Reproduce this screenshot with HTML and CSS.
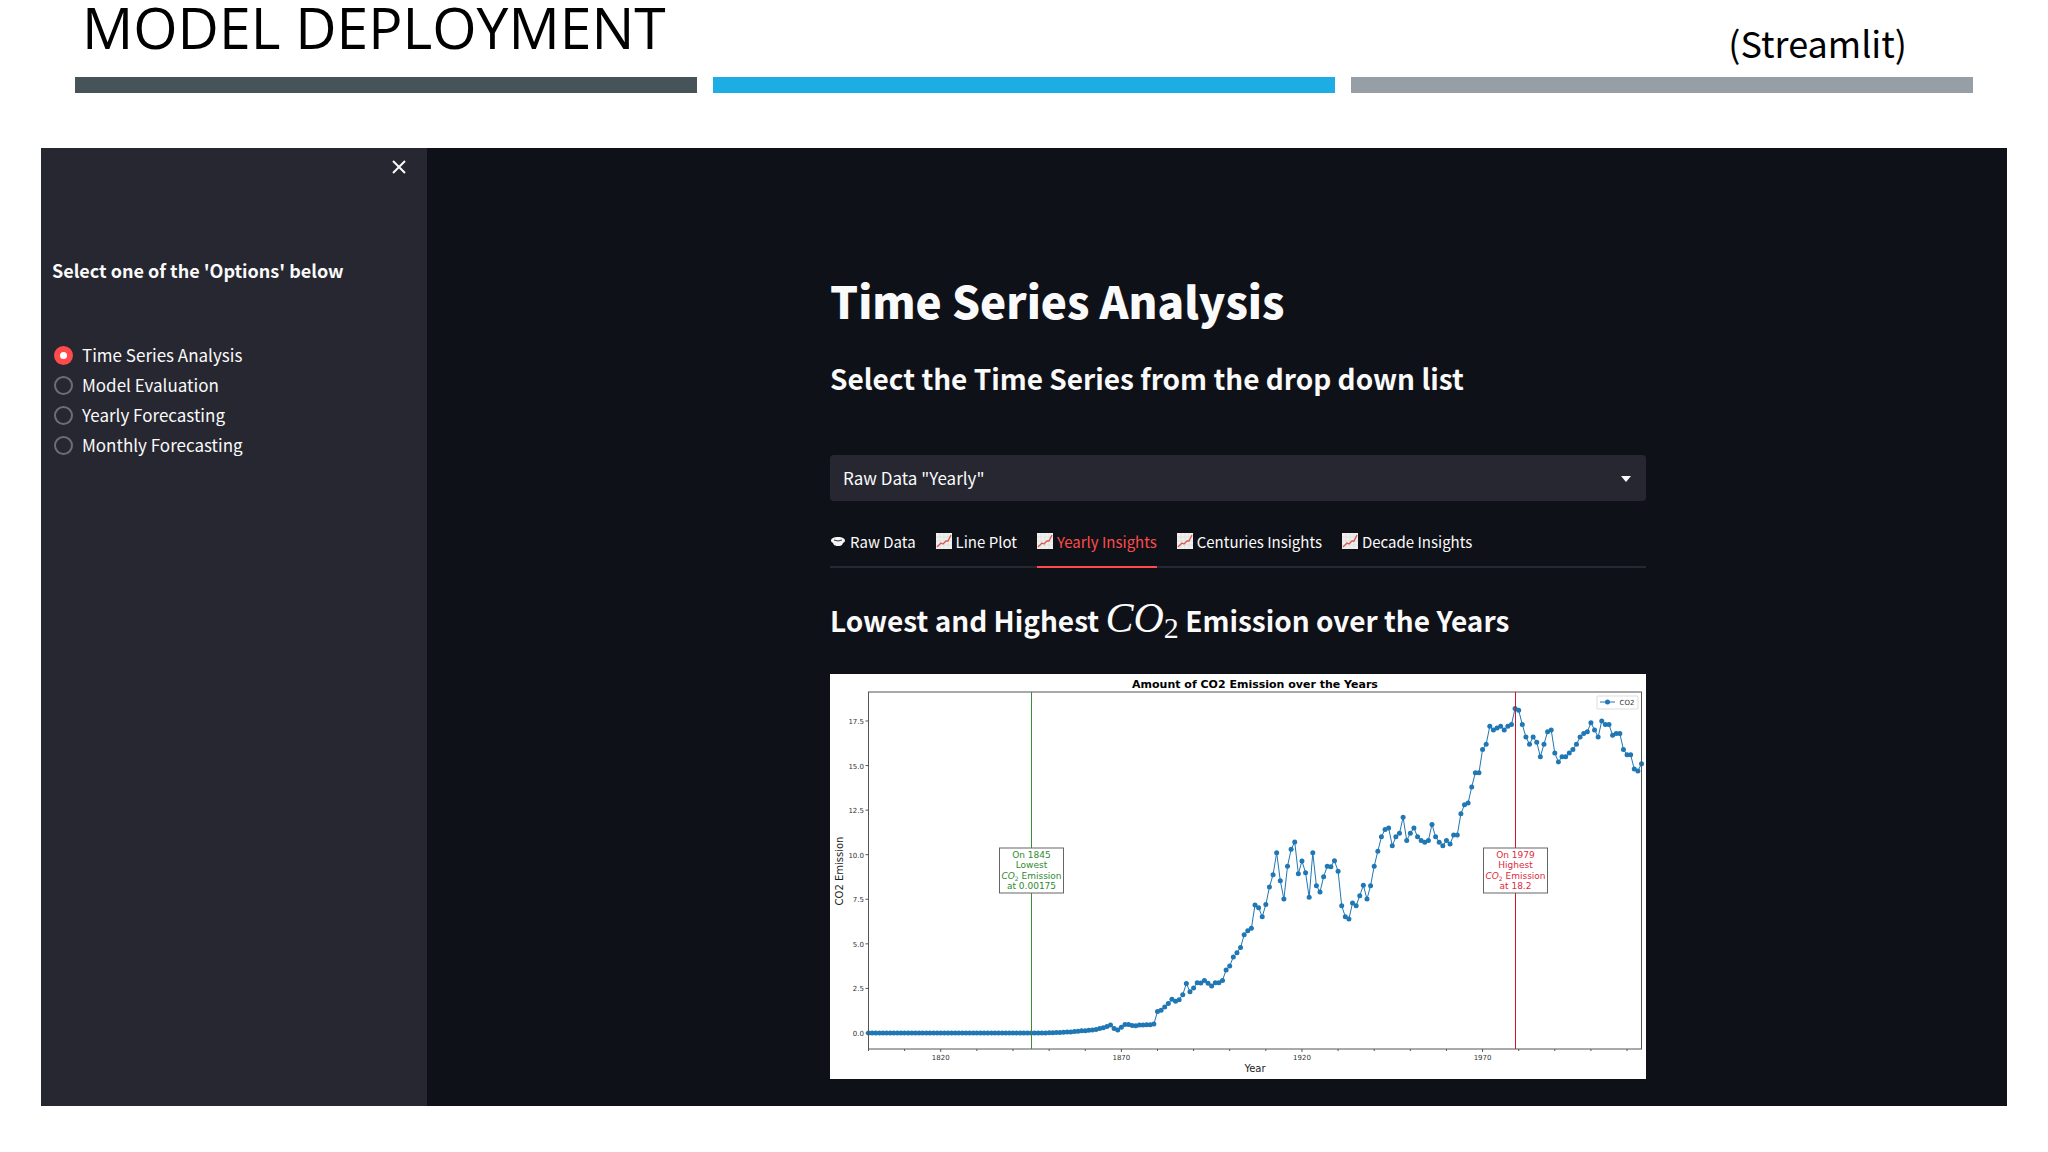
FILE: index.html
```html
<!DOCTYPE html>
<html lang="en">
<head>
    <meta charset="UTF-8">
    <meta name="viewport" content="width=device-width, initial-scale=1.0">
    <title>Model Deployment</title>
    <link rel="stylesheet" href="styles.css">
</head>
<body>
    <header class="slide-header">
        <h1 class="slide-title">MODEL DEPLOYMENT</h1>
        <p class="slide-note">(Streamlit)</p>
    </header>
    <div class="stripes">
        <div class="stripe stripe-dark"></div>
        <div class="stripe stripe-blue"></div>
        <div class="stripe stripe-gray"></div>
    </div>

    <div class="app">
        <aside class="sidebar">
            <button class="close-btn" type="button" aria-label="Close">
                <svg viewBox="0 0 14 14" width="14" height="14"><path d="M1 1L13 13M13 1L1 13"/></svg>
            </button>
            <h2 class="sidebar-title">Select one of the 'Options' below</h2>
            <form class="options">
                <label class="option"><input type="radio" name="page" checked> Time Series Analysis</label>
                <label class="option"><input type="radio" name="page"> Model Evaluation</label>
                <label class="option"><input type="radio" name="page"> Yearly Forecasting</label>
                <label class="option"><input type="radio" name="page"> Monthly Forecasting</label>
            </form>
        </aside>

        <main class="main">
            <div class="content">
                <h2 class="page-title">Time Series Analysis</h2>
                <h3 class="section-title"><label for="series">Select the Time Series from the drop down list</label></h3>

                <div class="select-box">
                    <select id="series">
                        <option>Raw Data "Yearly"</option>
                    </select>
                    <svg class="select-arrow" viewBox="0 0 10 6" width="10" height="6"><path d="M0 0H10L5 6Z"/></svg>
                </div>

                <!-- shared chart icon for the tabs -->
                <svg class="symbols" width="0" height="0">
                    <symbol id="chart-icon" viewBox="0 0 16 16">
                        <rect width="16" height="16" fill="#f3efec"/>
                        <path d="M4 0V16M8 0V16M12 0V16M0 4H16M0 8H16M0 12H16" stroke="#d5dbe0" stroke-width="0.6"/>
                        <path d="M1 14L5 10L7 11L10 8L12 8L15 2" fill="none" stroke="#d9574c" stroke-width="1.3"/>
                    </symbol>
                </svg>

                <nav class="tabs" role="tablist">
                    <button class="tab" type="button" role="tab">
                        <svg class="tab-icon" viewBox="0 0 16 16" width="16" height="16">
                            <path d="M1 8C1 5 4 4 8 4S15 5 15 8C15 9 14 9 13 10C12 13 10 13 8 13S4 13 3 10C2 9 1 9 1 8Z" fill="#f5f5f5"/>
                            <path d="M4 7Q8 9 12 7" fill="none" stroke="#33353d" stroke-width="1"/>
                        </svg>
                        Raw Data
                    </button>
                    <button class="tab" type="button" role="tab"><svg class="tab-icon" width="16" height="16"><use href="#chart-icon"/></svg> Line Plot</button>
                    <button class="tab active" type="button" role="tab" aria-selected="true"><svg class="tab-icon" width="16" height="16"><use href="#chart-icon"/></svg> Yearly Insights</button>
                    <button class="tab" type="button" role="tab"><svg class="tab-icon" width="16" height="16"><use href="#chart-icon"/></svg> Centuries Insights</button>
                    <button class="tab" type="button" role="tab"><svg class="tab-icon" width="16" height="16"><use href="#chart-icon"/></svg> Decade Insights</button>
                </nav>

                <h3 class="section-title chart-heading">Lowest and Highest <span class="formula">CO<sub>2</sub></span> Emission over the Years</h3>

                <svg class="chart" id="chart" viewBox="0 0 816 405">
                    <text class="chart-title" x="425" y="14">Amount of CO2 Emission over the Years</text>
                    <g id="plot"></g>
                    <rect class="axes" x="38.5" y="18" width="773" height="357"/>
                    <path class="low-line" d="M201.5 18V375"/>
                    <path class="high-line" d="M685.5 18V375"/>

                    <rect class="note-box" x="169.5" y="174" width="64" height="45"/>
                    <text class="note note-low" x="201.5" y="184">On 1845</text>
                    <text class="note note-low" x="201.5" y="194">Lowest</text>
                    <text class="note note-low" x="201.5" y="205"><tspan class="math">CO</tspan><tspan class="sub" dy="2">2</tspan><tspan dy="-2"> Emission</tspan></text>
                    <text class="note note-low" x="201.5" y="215">at 0.00175</text>

                    <rect class="note-box" x="653.5" y="174" width="64" height="45"/>
                    <text class="note note-high" x="685.5" y="184">On 1979</text>
                    <text class="note note-high" x="685.5" y="194">Highest</text>
                    <text class="note note-high" x="685.5" y="205"><tspan class="math">CO</tspan><tspan class="sub" dy="2">2</tspan><tspan dy="-2"> Emission</tspan></text>
                    <text class="note note-high" x="685.5" y="215">at 18.2</text>

                    <rect class="legend-box" x="767" y="22" width="41" height="13" rx="1"/>
                    <path class="series" d="M770 28H785"/>
                    <circle class="dot" cx="777.5" cy="28" r="2.5"/>
                    <text class="tick-label" x="797" y="31">CO2</text>

                    <text class="axis-label" x="425" y="398">Year</text>
                    <text class="axis-label" transform="translate(13 197) rotate(-90)">CO2 Emission</text>
                </svg>
            </div>
        </main>
    </div>

    <script>
        // Yearly CO2 emission; 1800-1849 stay near zero
        const values = new Array(50).fill(0).concat([
            0.01, 0.02, 0.03, 0.03, 0.04, 0.05, 0.06, 0.08, 0.1, 0.12,
            0.13, 0.15, 0.17, 0.2, 0.25, 0.3, 0.37, 0.45, 0.25, 0.17,
            0.32, 0.48, 0.48, 0.42, 0.41, 0.45, 0.45, 0.46, 0.46, 0.5,
            1.2, 1.27, 1.46, 1.65, 1.89, 1.78, 1.87, 2.15, 2.77, 2.32,
            2.52, 2.82, 2.8, 2.95, 2.79, 2.64, 2.82, 2.82, 2.95, 3.53,
            3.76, 4.26, 4.5, 4.79, 5.51, 5.74, 5.87, 7.18, 7.03, 6.52,
            7.2, 8.19, 8.88, 10.11, 8.54, 7.51, 9.35, 10.3, 10.71, 8.93,
            9.64, 8.99, 7.61, 10.11, 8.26, 7.91, 8.77, 9.35, 9.33, 9.66,
            9.07, 7.14, 6.52, 6.39, 7.29, 7.14, 7.7, 8.28, 7.51, 8.26,
            9.35, 10.2, 11, 11.42, 11.5, 10.5, 11, 11.2, 12.1, 10.8,
            11.2, 11.5, 11, 10.8, 10.7, 10.8, 11.7, 11, 10.7, 10.5,
            10.8, 10.6, 11.1, 11.1, 12.3, 12.8, 12.9, 13.8, 14.6, 14.6,
            15.9, 16.2, 17.2, 17, 17.1, 17.2, 17, 17.2, 17.3, 18.2,
            18.1, 17.3, 16.6, 16.2, 16.6, 16.3, 15.5, 16.2, 16.9, 17,
            15.7, 15.2, 15.5, 15.5, 15.7, 15.9, 16.2, 16.6, 16.8, 16.9,
            17.4, 17, 16.6, 17.5, 17.3, 17.3, 16.7, 16.8, 16.8, 15.9,
            15.6, 15.6, 14.8, 14.7, 15.1
        ]);

        const plot = document.getElementById('plot');
        const px = year => 38.5 + (year - 1800) * 773 / 214;
        const py = value => 359 - value * 17.83;

        function add(name, attrs, text) {
            const el = document.createElementNS('http://www.w3.org/2000/svg', name);
            for (const key in attrs) el.setAttribute(key, attrs[key]);
            if (text) el.textContent = text;
            plot.appendChild(el);
        }

        // Y axis
        for (let v = 0; v <= 17.5; v += 2.5) {
            add('path', { class: 'tick', d: `M38.5 ${py(v)}h-3` });
            add('text', { class: 'tick-label y-tick', x: 34, y: py(v) + 3 }, v.toFixed(1));
        }

        // X axis, one tick per decade
        for (let year = 1800; year <= 2010; year += 10) {
            const major = (year - 1820) % 50 === 0;
            add('path', { class: 'tick', d: `M${px(year)} 375v${major ? 3 : 2}` });
            if (major) add('text', { class: 'tick-label', x: px(year), y: 386 }, String(year));
        }

        add('polyline', { class: 'series', points: values.map((v, i) => px(1800 + i) + ',' + py(v)).join(' ') });
        values.forEach((v, i) => add('circle', { class: 'dot', cx: px(1800 + i), cy: py(v), r: 2.5 }));
    </script>
</body>
</html>
```
FILE: styles.css
```css
* {
    box-sizing: border-box;
}
body {
    margin: 0;
    background-color: #fff;
    font-family: "Noto Sans CJK JP", "Noto Sans CJK SC", sans-serif;
    color: #fafafa;
}
h1, h2, h3, p {
    margin: 0;
}

/* Slide header */
.slide-header {
    display: flex;
    justify-content: space-between;
    height: 77px;
    padding: 0 141px 0 82px;
    color: #000;
}
.slide-title {
    font-family: "Open Sans", "Noto Sans", sans-serif;
    font-size: 57px;
    font-weight: 400;
    line-height: 54px;
}
.slide-note {
    font-size: 36px;
    line-height: 84px;
}
.stripes {
    display: grid;
    grid-template-columns: repeat(3, 1fr);
    gap: 16px;
    padding: 0 75px;
}
.stripe {
    height: 16px;
}
.stripe-dark {
    background-color: #465359;
}
.stripe-blue {
    background-color: #1cade4;
}
.stripe-gray {
    background-color: #969fa5;
}

/* App window */
.app {
    display: flex;
    margin: 55px 41px 0;
    background-color: #0f1118;
}
.sidebar {
    display: flex;
    flex-direction: column;
    width: 386px;
    padding: 10px 11px;
    background-color: #262730;
}
.close-btn {
    display: flex;
    align-self: flex-end;
    padding: 2px;
    margin-right: 8px;
    border: none;
    background: none;
}
.close-btn path {
    stroke: #fafafa;
    stroke-width: 2;
}
.sidebar-title {
    margin-top: 82px;
    font-size: 18px;
    line-height: 24px;
}
.options {
    display: flex;
    flex-direction: column;
    margin-top: 58px;
}
.option {
    display: flex;
    align-items: center;
    gap: 9px;
    font-size: 17px;
    line-height: 30px;
}
.option input {
    appearance: none;
    width: 19px;
    height: 19px;
    margin: 0 0 0 2px;
    border: 2px solid #6d6e75;
    border-radius: 50%;
}
.option input:checked {
    border: 6px solid #ff4b4b;
    background-color: #fff;
}

.main {
    flex: 1;
    padding: 120px 0 27px 42px;
}
.content {
    max-width: 816px;
    margin: 0 auto;
}
.page-title {
    font-size: 44px;
    font-weight: 900;
    line-height: 64px;
}
.section-title {
    margin-top: 22px;
    font-size: 28px;
    font-weight: 700;
    line-height: 48px;
}
.select-box {
    position: relative;
    margin-top: 53px;
}
.select-box select {
    appearance: none;
    width: 100%;
    height: 46px;
    padding: 0 13px 2px;
    border: none;
    border-radius: 4px;
    background-color: #262730;
    color: #fafafa;
    font-family: inherit;
    font-size: 17px;
}
.select-arrow {
    position: absolute;
    top: 21px;
    right: 15px;
    fill: #fafafa;
    pointer-events: none;
}
.symbols {
    position: absolute;
}

.tabs {
    display: flex;
    gap: 20px;
    margin-top: 15px;
    border-bottom: 2px solid #262730;
}
.tab {
    display: flex;
    align-items: center;
    gap: 4px;
    height: 52px;
    margin-bottom: -2px;
    padding: 0;
    border: none;
    border-bottom: 2px solid transparent;
    background: none;
    color: #fafafa;
    font-family: inherit;
    font-size: 15px;
    white-space: nowrap;
}
.tab.active {
    border-color: #ff4b4b;
    color: #ff4b4b;
}

.chart-heading {
    margin-top: 28px;
}
.formula {
    font-family: "Liberation Serif", serif;
    font-size: 42px;
    font-style: italic;
    font-weight: 400;
    line-height: 1;
}
.formula sub {
    font-size: 30px;
    font-style: normal;
    line-height: 0;
    vertical-align: -6px;
}

/* Chart */
.chart {
    display: block;
    width: 100%;
    margin-top: 30px;
    background-color: #fff;
    font-family: "DejaVu Sans", sans-serif;
    text-anchor: middle;
}
.chart-title {
    font-size: 11px;
    font-weight: bold;
}
.axes {
    fill: none;
    stroke: #555;
}
.tick {
    stroke: #555;
}
.tick-label {
    font-size: 7px;
    fill: #333;
}
.y-tick {
    text-anchor: end;
}
.axis-label {
    font-size: 10px;
    fill: #222;
}
.series {
    fill: none;
    stroke: #1f77b4;
}
.dot {
    fill: #1f77b4;
}
.low-line {
    stroke: #3c8a3c;
}
.high-line {
    stroke: #d0142e;
}
.note-box {
    fill: #fff;
    stroke: #666;
}
.note {
    font-size: 9px;
}
.note-low {
    fill: #2f8a2f;
}
.note-high {
    fill: #e02a40;
}
.math {
    font-style: italic;
}
.sub {
    font-size: 6px;
}
.legend-box {
    fill: #fff;
    stroke: #ddd;
}
```
